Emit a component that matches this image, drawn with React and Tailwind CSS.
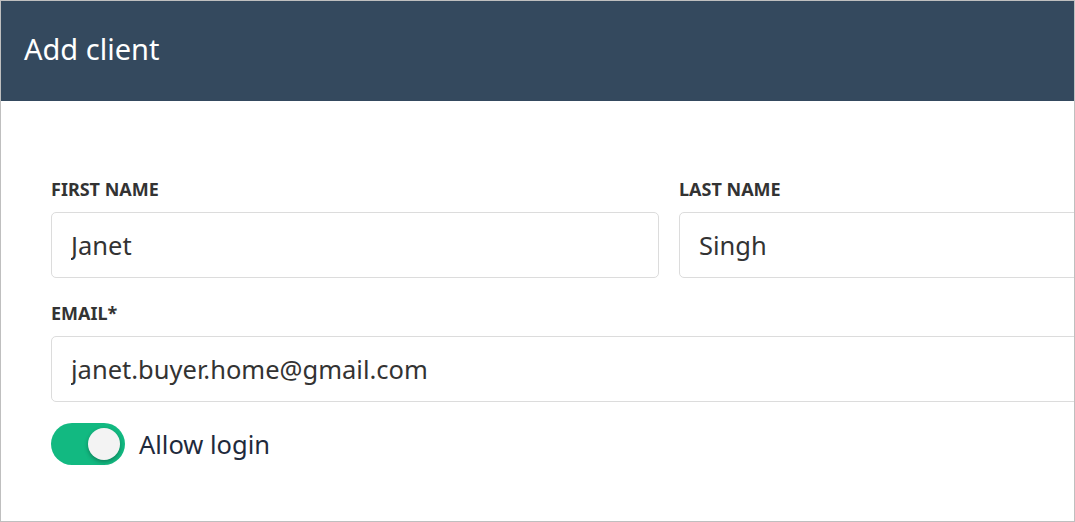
import React, { useState } from "react";

const font = { fontFamily: '"Noto Sans", "Open Sans", sans-serif' };

function Field({ label, value, className = "" }) {
  return (
    <div className={className}>
      <label className="block text-[18px] leading-6 font-bold uppercase text-[#333]">{label}</label>
      <input
        defaultValue={value}
        className="mt-[11px] block w-full h-[66px] px-[19px] rounded-[5px] border border-[#dcdcdc] bg-white text-[25.5px] text-[#333] outline-none"
      />
    </div>
  );
}

export default function App() {
  const [allow, setAllow] = useState(true);

  return (
    <div style={font} className="w-[1075px] h-[522px] border border-[#bfbfbf] overflow-hidden bg-white">
      <div className="w-[1336px]">
        <div className="h-[100px] bg-[#34495e] flex items-center px-[23px] pb-[5px]">
          <h1 className="text-[29px] text-white font-normal">Add client</h1>
        </div>
        <div className="px-[50px] pt-[76px]">
          <div className="grid grid-cols-2 gap-5">
            <Field label="First name" value="Janet" />
            <Field label="Last name" value="Singh" />
          </div>
          <Field label="Email*" value="janet.buyer.home@gmail.com" className="mt-[23px]" />
          <div className="mt-[21px] flex items-center gap-[14px]">
            <button
              onClick={() => setAllow(!allow)}
              className={`relative w-[74px] h-[42px] rounded-full transition-colors ${allow ? "bg-[#12b981]" : "bg-gray-300"}`}
            >
              <span
                className={`absolute top-[5px] w-[32px] h-[32px] rounded-full bg-[#f3f3f3] shadow-[0_2px_4px_rgba(0,0,0,0.3)] transition-all ${allow ? "left-[37px]" : "left-[5px]"}`}
              />
            </button>
            <span className="text-[25.5px] text-[#1f2a3c]">Allow login</span>
          </div>
        </div>
      </div>
    </div>
  );
}
